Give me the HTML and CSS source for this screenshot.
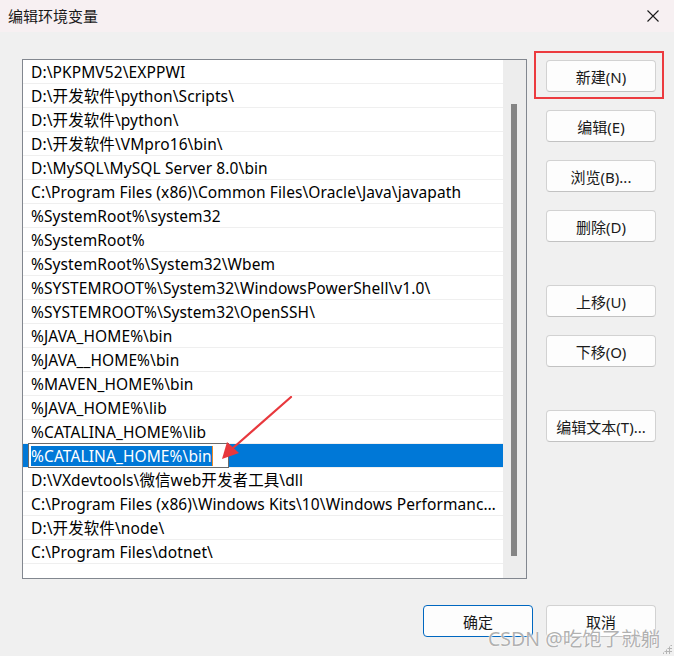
FILE: index.html
```html
<!DOCTYPE html>
<html lang="zh-CN">
<head>
<meta charset="utf-8">
<title>编辑环境变量</title>
<link rel="stylesheet" href="styles.css">
</head>
<body>
<div class="dialog">
  <div class="titlebar">
    <span class="title">编辑环境变量</span>
    <svg class="close" width="12" height="12" viewBox="0 0 12 12"><path d="M0.5 0.5 L11.5 11.5 M11.5 0.5 L0.5 11.5" stroke="#1a1a1a" stroke-width="1.1" fill="none"/></svg>
  </div>
  <div class="main">
    <div class="listbox">
      <div class="rows">
        <div class="row">D:\PKPMV52\EXPPWI</div>
        <div class="row">D:\开发软件\python\Scripts\</div>
        <div class="row">D:\开发软件\python\</div>
        <div class="row">D:\开发软件\VMpro16\bin\</div>
        <div class="row">D:\MySQL\MySQL Server 8.0\bin</div>
        <div class="row">C:\Program Files (x86)\Common Files\Oracle\Java\javapath</div>
        <div class="row">%SystemRoot%\system32</div>
        <div class="row">%SystemRoot%</div>
        <div class="row">%SystemRoot%\System32\Wbem</div>
        <div class="row">%SYSTEMROOT%\System32\WindowsPowerShell\v1.0\</div>
        <div class="row">%SYSTEMROOT%\System32\OpenSSH\</div>
        <div class="row">%JAVA_HOME%\bin</div>
        <div class="row">%JAVA__HOME%\bin</div>
        <div class="row">%MAVEN_HOME%\bin</div>
        <div class="row">%JAVA_HOME%\lib</div>
        <div class="row">%CATALINA_HOME%\lib</div>
        <div class="row selected">
          <div class="editbox"><span class="sel">%CATALINA_HOME%\bin</span><span class="caret"></span></div>
        </div>
        <div class="row">D:\VXdevtools\微信web开发者工具\dll</div>
        <div class="row">C:\Program Files (x86)\Windows Kits\10\Windows Performance Toolkit\</div>
        <div class="row">D:\开发软件\node\</div>
        <div class="row">C:\Program Files\dotnet\</div>
      </div>
      <div class="scrollbar"><div class="thumb"></div></div>
    </div>
    <div class="buttons">
      <div class="btn-wrap">
        <button class="btn">新建(N)</button>
        <div class="highlight"></div>
      </div>
      <button class="btn">编辑(E)</button>
      <button class="btn">浏览(B)...</button>
      <button class="btn">删除(D)</button>
      <button class="btn group">上移(U)</button>
      <button class="btn">下移(O)</button>
      <button class="btn group">编辑文本(T)...</button>
    </div>
  </div>
  <div class="footer">
    <button class="btn default">确定</button>
    <button class="btn">取消</button>
  </div>
  <svg class="arrow" width="80" height="75" viewBox="0 0 80 75">
    <line x1="71" y1="1" x2="13" y2="52" stroke="#e8383d" stroke-width="2.2" stroke-linecap="round"/>
    <polygon points="2,63 7,46 19,57" fill="#e8383d"/>
  </svg>
  <div class="watermark">CSDN @吃饱了就躺</div>
  <div class="grip"></div>
</div>
</body>
</html>
```

FILE: styles.css
```css
* { box-sizing: border-box; }
html, body { margin: 0; padding: 0; }
body {
  width: 674px;
  height: 656px;
  background: #f0f0f0;
  font-family: "Noto Sans", "Noto Sans CJK SC", sans-serif;
  font-size: 15px;
  color: #000;
  overflow: hidden;
}
.dialog {
  position: relative;
  width: 674px;
  height: 656px;
  display: flex;
  flex-direction: column;
}
.titlebar {
  height: 32px;
  background: #f7f0f2;
  display: flex;
  align-items: center;
  justify-content: space-between;
  padding: 0 15px 1px 8px;
}
.title {
  font-family: "Noto Sans CJK SC", sans-serif;
  font-size: 15px;
  color: #1a1a1a;
}
.main {
  display: flex;
  padding: 27px 0 0 22px;
}
.listbox {
  width: 505px;
  height: 520px;
  border: 1px solid #82878f;
  background: #fff;
  display: flex;
}
.rows {
  width: 480px;
  display: flex;
  flex-direction: column;
}
.row {
  position: relative;
  height: 24px;
  line-height: 23px;
  padding-top: 1px;
  font-size: 15.5px;
  letter-spacing: 0.1px;
  border-bottom: 1px solid #efefef;
  padding-left: 8px;
  padding-right: 4px;
  white-space: nowrap;
  overflow: hidden;
  text-overflow: ellipsis;
}
.row.selected {
  background: #0078d7;
  overflow: visible;
}
.editbox {
  position: absolute;
  left: 5px;
  top: -1px;
  width: 201px;
  height: 25px;
  background: #fff;
  border: 1px solid #6b6b6b;
  padding-left: 2px;
  padding-top: 1px;
  display: flex;
  align-items: center;
}
.sel {
  background: #0078d7;
  color: #fff;
  line-height: 20px;
}
.caret {
  width: 1px;
  height: 20px;
  background: #f08a24;
}
.scrollbar {
  width: 23px;
  background: #ededed;
  position: relative;
}
.thumb {
  position: absolute;
  left: 8px;
  top: 44px;
  width: 6px;
  height: 452px;
  background: #858585;
}
.buttons {
  display: flex;
  flex-direction: column;
  margin-left: 19px;
  padding-top: 1px;
  gap: 18px;
}
.btn {
  width: 110px;
  height: 32px;
  background: #fdfdfd;
  border: 1px solid #d2d2d2;
  border-bottom-color: #c2c2c2;
  border-radius: 4px;
  font-family: "Noto Sans", "Noto Sans CJK SC", sans-serif;
  font-size: 15px;
  color: #1a1a1a;
  padding: 0;
}
.btn.group { margin-top: 25px; }
.btn-wrap { position: relative; }
.btn-wrap .btn { display: block; }
.highlight {
  position: absolute;
  left: -12px;
  top: -9px;
  width: 130px;
  height: 48px;
  border: 2px solid #ec3b3f;
}
.footer {
  display: flex;
  justify-content: flex-end;
  gap: 13px;
  padding-right: 18px;
  margin-top: 26px;
}
.btn.default {
  border: 1px solid #0067c0;
}
.arrow {
  position: absolute;
  left: 220px;
  top: 396px;
}
.watermark {
  position: absolute;
  left: 488px;
  top: 623px;
  font-family: "Noto Sans", "Noto Sans CJK SC", sans-serif;
  font-size: 19.5px;
  color: rgba(110, 110, 110, 0.55);
  text-shadow: 0 0 2px #fff, 0 0 1px #fff;
  white-space: nowrap;
}
.grip {
  position: absolute;
  right: 2px;
  bottom: 2px;
  width: 10px;
  height: 10px;
  background-image: radial-gradient(circle, #b5b5b5 1px, transparent 1.2px);
  background-size: 3px 3px;
  clip-path: polygon(100% 0, 100% 100%, 0 100%);
}
```
